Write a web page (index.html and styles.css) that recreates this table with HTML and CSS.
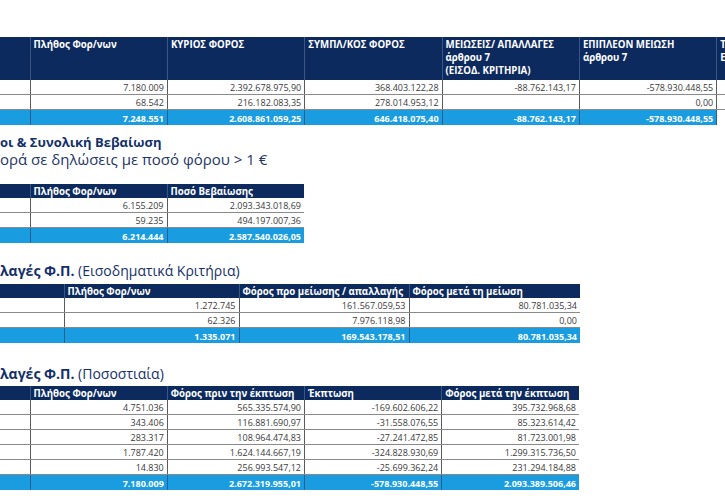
FILE: index.html
```html
<!DOCTYPE html>
<html lang="el">
<head>
<meta charset="utf-8">
<link rel="stylesheet" href="styles.css">
</head>
<body>
<div class="page">
  <table class="grid t1">
    <colgroup><col class="c-lab"><col class="c-w"><col class="c-w"><col class="c-w"><col class="c-w"><col class="c-w"><col class="c-rest"></colgroup>
    <tr class="head tall">
      <th></th>
      <th>Πλήθος Φορ/νων</th>
      <th>ΚΥΡΙΟΣ ΦΟΡΟΣ</th>
      <th>ΣΥΜΠΛ/ΚΟΣ ΦΟΡΟΣ</th>
      <th>ΜΕΙΩΣΕΙΣ/ ΑΠΑΛΛΑΓΕΣ<br>άρθρου 7<br>(ΕΙΣΟΔ. ΚΡΙΤΗΡΙΑ)</th>
      <th>ΕΠΙΠΛΕΟΝ ΜΕΙΩΣΗ<br>άρθρου 7</th>
      <th>ΤΕΛΙΚΟΣ<br>ΕΚΚΑΘΑΡΙΣΗΣ</th>
    </tr>
    <tr><td></td><td>7.180.009</td><td>2.392.678.975,90</td><td>368.403.122,28</td><td>-88.762.143,17</td><td>-578.930.448,55</td><td class="plain"></td></tr>
    <tr><td></td><td>68.542</td><td>216.182.083,35</td><td>278.014.953,12</td><td></td><td>0,00</td><td class="plain"></td></tr>
    <tr class="total"><td></td><td>7.248.551</td><td>2.608.861.059,25</td><td>646.418.075,40</td><td>-88.762.143,17</td><td>-578.930.448,55</td><td class="plain"></td></tr>
  </table>

  <h2 class="title t2-title">οι &amp; Συνολική Βεβαίωση</h2>
  <p class="subtitle">ορά σε δηλώσεις με ποσό φόρου &gt; 1 €</p>

  <table class="grid t2">
    <colgroup><col class="c-lab"><col class="c-w"><col class="c-w"></colgroup>
    <tr class="head"><th></th><th>Πλήθος Φορ/νων</th><th>Ποσό Βεβαίωσης</th></tr>
    <tr><td></td><td>6.155.209</td><td>2.093.343.018,69</td></tr>
    <tr><td></td><td>59.235</td><td>494.197.007,36</td></tr>
    <tr class="total"><td></td><td>6.214.444</td><td>2.587.540.026,05</td></tr>
  </table>

  <h2 class="title t3-title"><b>λαγές Φ.Π.</b> (Εισοδηματικά Κριτήρια)</h2>

  <table class="grid t3">
    <colgroup><col class="c-lab3"><col class="c-w3a"><col class="c-w3b"><col class="c-w3c"></colgroup>
    <tr class="head"><th></th><th>Πλήθος Φορ/νων</th><th>Φόρος προ μείωσης / απαλλαγής</th><th>Φόρος μετά τη μείωση</th></tr>
    <tr><td></td><td>1.272.745</td><td>161.567.059,53</td><td>80.781.035,34</td></tr>
    <tr><td></td><td>62.326</td><td>7.976.118,98</td><td>0,00</td></tr>
    <tr class="total"><td></td><td>1.335.071</td><td>169.543.178,51</td><td>80.781.035,34</td></tr>
  </table>

  <h2 class="title t4-title"><b>λαγές Φ.Π.</b> (Ποσοστιαία)</h2>

  <table class="grid t4">
    <colgroup><col class="c-lab"><col class="c-w"><col class="c-w"><col class="c-w"><col class="c-w"></colgroup>
    <tr class="head"><th></th><th>Πλήθος Φορ/νων</th><th>Φόρος πριν την έκπτωση</th><th>Έκπτωση</th><th>Φόρος μετά την έκπτωση</th></tr>
    <tr><td></td><td>4.751.036</td><td>565.335.574,90</td><td>-169.602.606,22</td><td>395.732.968,68</td></tr>
    <tr><td></td><td>343.406</td><td>116.881.690,97</td><td>-31.558.076,55</td><td>85.323.614,42</td></tr>
    <tr><td></td><td>283.317</td><td>108.964.474,83</td><td>-27.241.472,85</td><td>81.723.001,98</td></tr>
    <tr><td></td><td>1.787.420</td><td>1.624.144.667,19</td><td>-324.828.930,69</td><td>1.299.315.736,50</td></tr>
    <tr><td></td><td>14.830</td><td>256.993.547,12</td><td>-25.699.362,24</td><td>231.294.184,88</td></tr>
    <tr class="total"><td></td><td>7.180.009</td><td>2.672.319.955,01</td><td>-578.930.448,55</td><td>2.093.389.506,46</td></tr>
  </table>
</div>
</body>
</html>
```

FILE: styles.css
```css
html, body {
  margin: 0;
  padding: 0;
  overflow: hidden;
  background: #ffffff;
}

.page {
  width: 725px;
  padding-top: 37px;
  font-family: "Open Sans", "Liberation Sans", sans-serif;
}

.grid {
  border-collapse: collapse;
  table-layout: fixed;
  font-size: 9px;
  line-height: 13px;
}

.t1 { width: 817px; }
.t2 { width: 304px; }
.t3 { width: 580px; }
.t4 { width: 579px; }

.c-lab { width: 30px; }
.c-w { width: 137px; }
.c-rest { width: 100px; }
.c-lab3 { width: 64px; }
.c-w3a { width: 175px; }
.c-w3b { width: 170px; }
.c-w3c { width: 171px; }

.grid th {
  background: #0d2a5f;
  color: #ffffff;
  font-size: 9.7px;
  font-weight: 700;
  text-align: left;
  vertical-align: top;
  padding: 1px 3px 0;
  height: 13px;
  border-left: 1px solid #3b5584;
  white-space: nowrap;
  overflow: hidden;
}

.grid th:first-child { border-left: none; }

.grid .tall th {
  height: 42px;
  padding-top: 1px;
}

.grid td {
  text-align: right;
  color: #3a3a3a;
  padding: 1px 3px 0;
  height: 13px;
  border-left: 1px solid #5a5a5a;
  border-bottom: 1px solid #8a8a8a;
  white-space: nowrap;
  overflow: hidden;
}

.grid td:first-child { border-left: none; }

.grid .total td {
  background: #199de0;
  color: #ffffff;
  font-weight: 700;
  border-bottom: none;
  border-left-color: #2a5f8f;
  height: 14px;
}

.grid .total td.plain,
.grid td.plain {
  background: #ffffff;
}

.title {
  margin: 0;
  font-size: 13px;
  line-height: 16px;
  font-weight: 700;
  color: #13306a;
  white-space: nowrap;
}

.t3-title, .t4-title { font-weight: 400; font-size: 14px; }
.t3-title b, .t4-title b { font-weight: 700; }

.t2-title { margin-top: 9px; }
.subtitle {
  margin: 0 0 16px;
  font-size: 15px;
  line-height: 18px;
  color: #1d3566;
  white-space: nowrap;
}

.t3-title { margin-top: 20px; margin-bottom: 5px; }
.t4-title { margin-top: 23px; margin-bottom: 4px; }
```
